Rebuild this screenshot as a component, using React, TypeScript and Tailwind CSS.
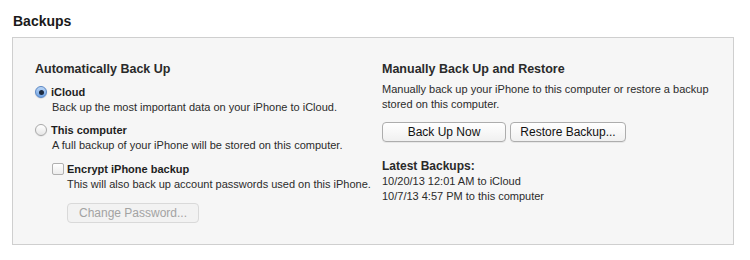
import React from "react";

const font = { fontFamily: '"Liberation Sans", Arial, sans-serif' };

const Radio: React.FC<{ checked?: boolean }> = ({ checked }) =>
  checked ? (
    <span className="flex h-[12px] w-[12px] shrink-0 items-center justify-center rounded-full border border-[#5a87c5] bg-gradient-to-b from-[#bcd6f5] to-[#6ea2e4] shadow-[0_0.5px_1px_rgba(0,0,0,0.2)]">
      <span className="h-[5px] w-[5px] rounded-full bg-[#1c2a40]" />
    </span>
  ) : (
    <span className="h-[12px] w-[12px] shrink-0 rounded-full border border-[#a9a9a9] bg-gradient-to-b from-[#ffffff] to-[#e6e6e6] shadow-[0_0.5px_1px_rgba(0,0,0,0.12)]" />
  );

const Button: React.FC<{ label: string; width: string; disabled?: boolean }> = ({
  label,
  width,
  disabled,
}) => (
  <button
    className={
      disabled
        ? `${width} h-[20px] rounded-[4px] border border-[#d9d9d9] bg-[#f2f2f2] text-[12px] text-[#a3a3a3]`
        : `${width} h-[20px] rounded-[4px] border border-[#adadad] bg-gradient-to-b from-[#ffffff] to-[#f0f0f0] text-[12px] text-[#111] shadow-[0_1px_0_rgba(0,0,0,0.06)]`
    }
  >
    {label}
  </button>
);

export default function App() {
  return (
    <div className="h-[260px] w-[750px] bg-white pt-[13px] text-[#1e1e1e]" style={font}>
      <h2 className="ml-[13px] text-[14px] leading-[17px] font-bold text-[#1a1a1a]">Backups</h2>

      <div className="mt-[7px] ml-[12px] flex h-[208px] w-[722px] border border-[#cfcfcf] bg-[#f6f6f6] pt-[23px] pl-[22px]">
        {/* left column */}
        <div className="w-[347px]">
          <h3 className="text-[12.5px] leading-[16px] font-bold text-[#2a2a2a]">Automatically Back Up</h3>

          <div className="mt-[7px] flex items-center gap-[4px]">
            <Radio checked />
            <span className="text-[11px] leading-[16px] font-bold">iCloud</span>
          </div>
          <p className="ml-[17px] text-[11px] leading-[15px] text-[#2b2b2b]">
            Back up the most important data on your iPhone to iCloud.
          </p>

          <div className="mt-[7px] flex items-center gap-[4px]">
            <Radio />
            <span className="text-[11px] leading-[16px] font-bold">This computer</span>
          </div>
          <p className="ml-[17px] text-[11px] leading-[15px] text-[#2b2b2b]">
            A full backup of your iPhone will be stored on this computer.
          </p>

          <div className="mt-[8px] ml-[17px] flex items-center gap-[3px]">
            <span className="h-[12px] w-[12px] shrink-0 rounded-[2px] border border-[#b0b0b0] bg-gradient-to-b from-[#ffffff] to-[#ececec]" />
            <span className="text-[11px] leading-[16px] font-bold">Encrypt iPhone backup</span>
          </div>
          <p className="ml-[32px] text-[11px] leading-[15px] text-[#2b2b2b]">
            This will also back up account passwords used on this iPhone.
          </p>

          <div className="mt-[8px] ml-[32px]">
            <Button label="Change Password..." width="w-[132px]" disabled />
          </div>
        </div>

        {/* right column */}
        <div className="w-[340px]">
          <h3 className="text-[12.5px] leading-[16px] font-bold text-[#2a2a2a]">
            Manually Back Up and Restore
          </h3>
          <p className="mt-[5px] text-[11px] leading-[15px] text-[#2b2b2b]">
            Manually back up your iPhone to this computer or restore a backup
            <br />
            stored on this computer.
          </p>

          <div className="mt-[10px] flex gap-[4px]">
            <Button label="Back Up Now" width="w-[124px]" />
            <Button label="Restore Backup..." width="w-[116px]" />
          </div>

          <h4 className="mt-[17px] text-[12px] leading-[15px] font-bold text-[#2a2a2a]">Latest Backups:</h4>
          <p className="text-[11px] leading-[15px] text-[#2b2b2b]">10/20/13 12:01 AM to iCloud</p>
          <p className="text-[11px] leading-[14px] text-[#2b2b2b]">10/7/13 4:57 PM to this computer</p>
        </div>
      </div>
    </div>
  );
}
